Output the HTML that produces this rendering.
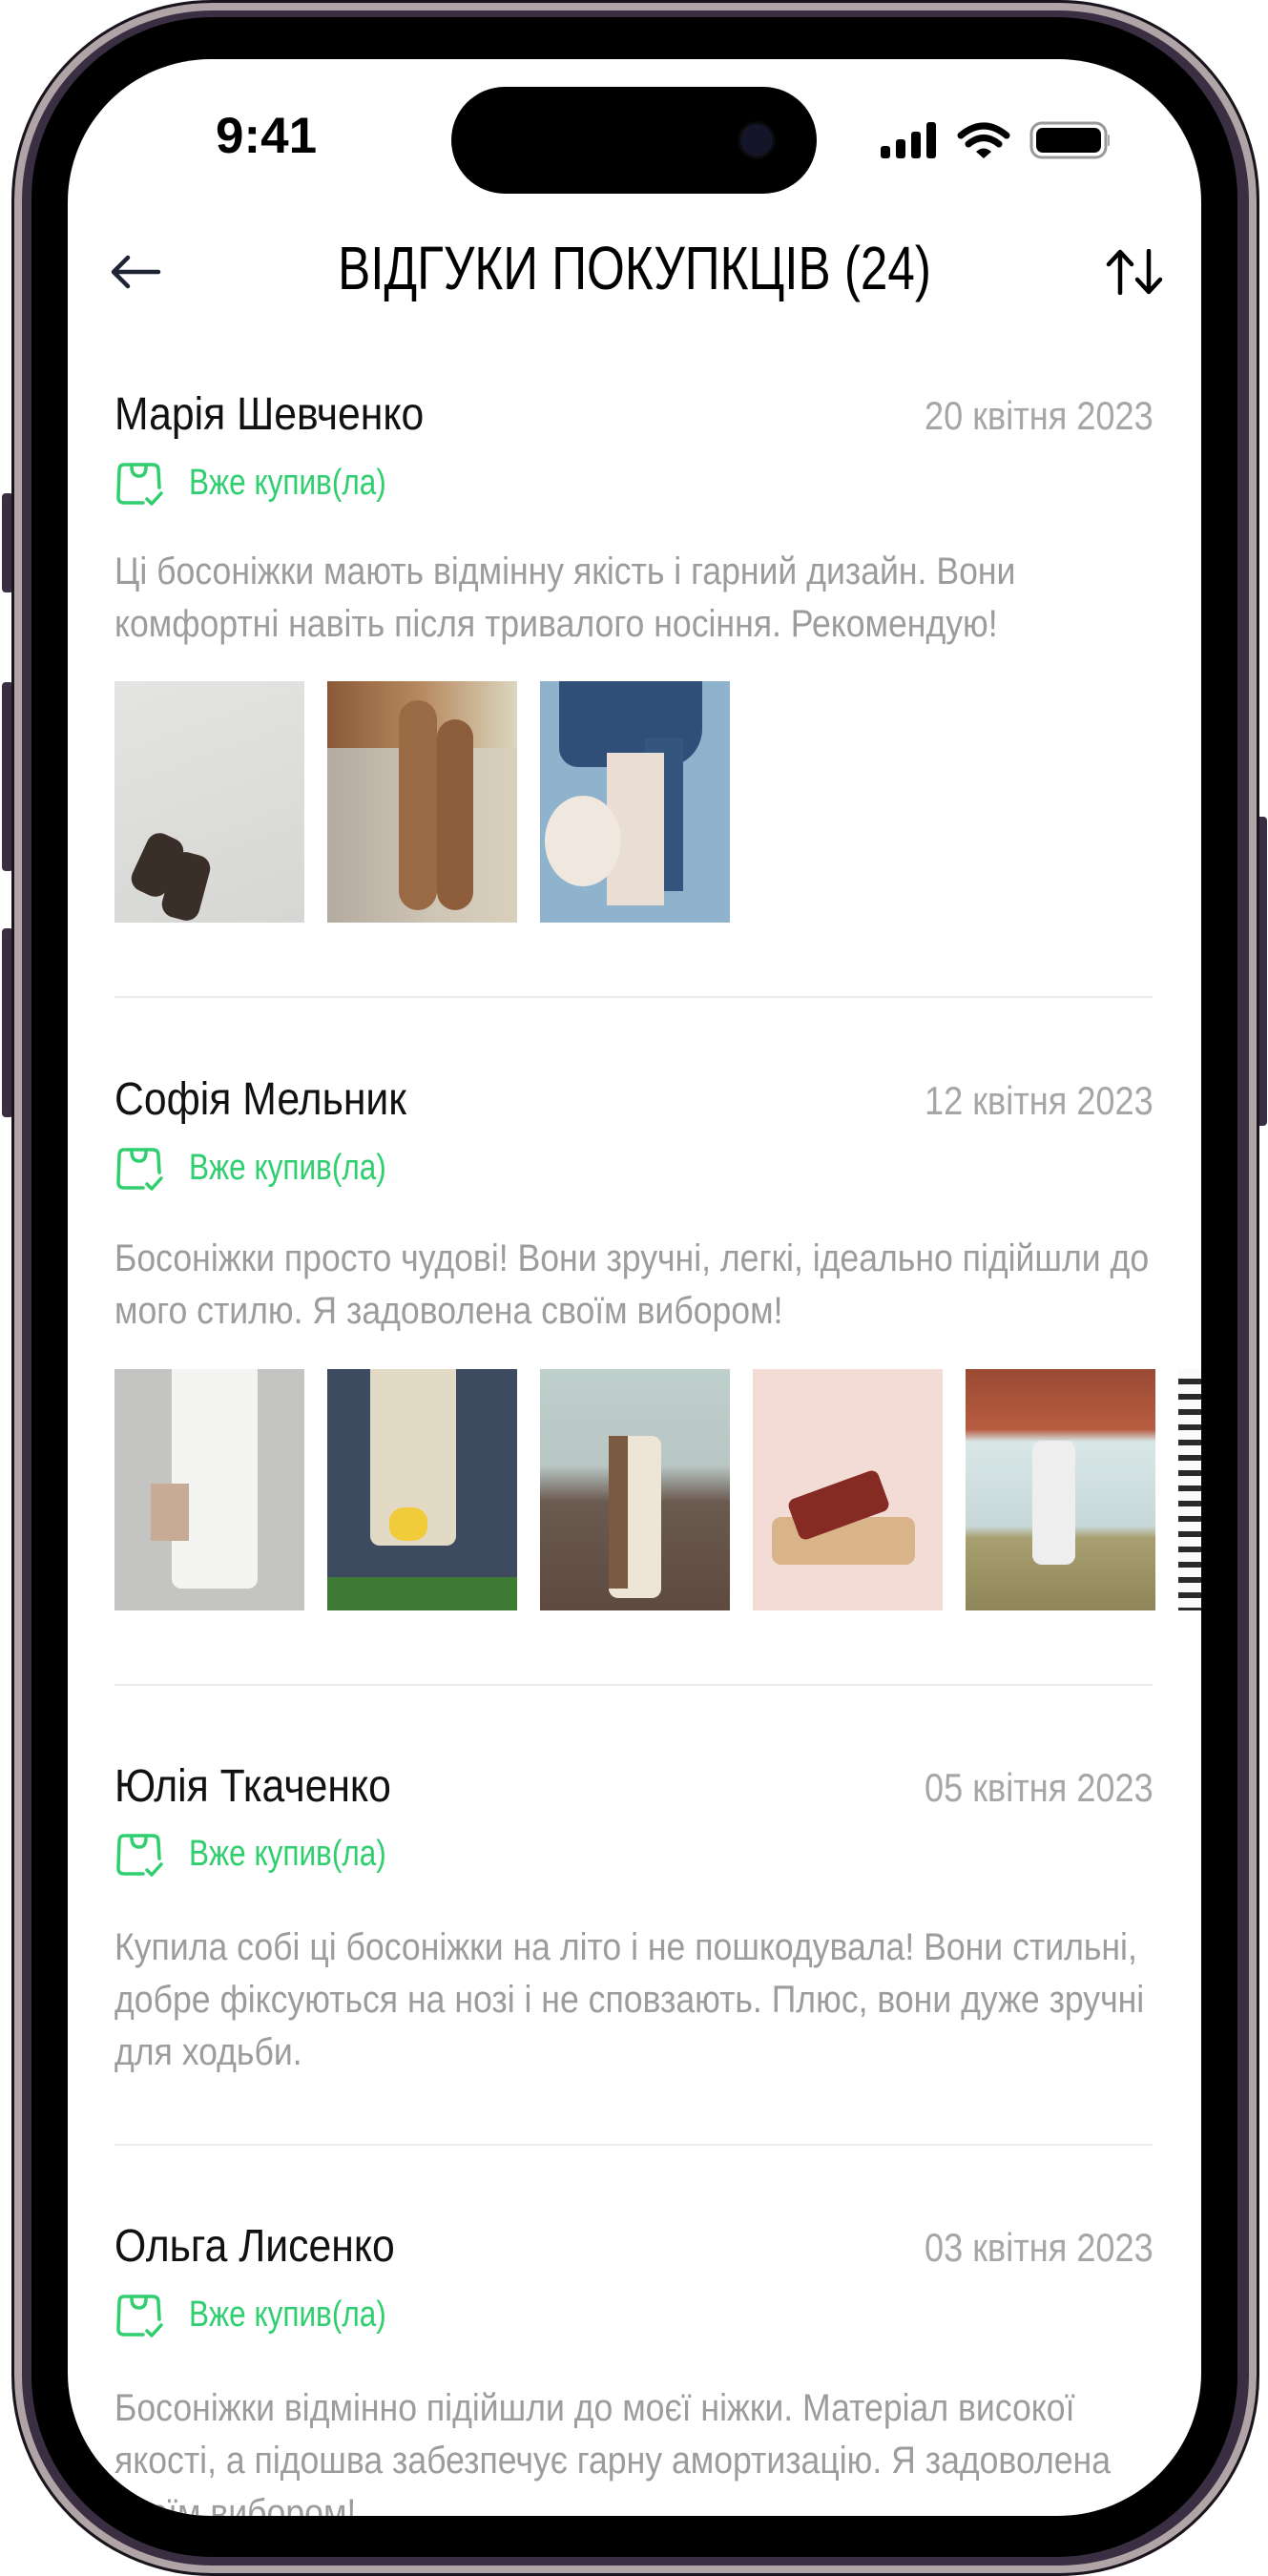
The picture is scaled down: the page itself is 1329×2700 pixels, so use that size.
<!DOCTYPE html>
<html><head><meta charset="utf-8">
<style>
*{margin:0;padding:0;box-sizing:border-box}
html,body{width:1329px;height:2700px;background:#fff;overflow:hidden;position:relative}
body{font-family:"Liberation Sans","Noto Sans CJK SC",sans-serif}
.a{position:absolute}
.frame{left:12px;top:0;width:1308px;height:2700px;border-radius:210px;background:#3a2f42;border:3px solid #1a141e;box-shadow:inset 0 0 0 8px #b0a4a6, inset 0 0 0 11px #3a2f42}
.bezel{left:33px;top:18px;width:1264px;height:2662px;border-radius:190px;background:#000}
.screen{left:71px;top:62px;width:1188px;height:2575px;border-radius:150px;background:#fff;overflow:hidden}
.btn{background:#3a2f42;border-radius:4px}
.t{position:absolute;white-space:nowrap}
.name{font-size:48px;color:#111;transform:scaleX(0.89);transform-origin:0 0}
.date{font-size:42px;color:#a6a6a6;text-align:right;right:50px;transform:scaleX(0.86);transform-origin:100% 0}
.badge{font-size:38px;color:#2fcf6f;transform:scaleX(0.83);transform-origin:0 0}
.txt{font-size:40px;color:#9c9c9c;line-height:55px;transform:scaleX(0.89);transform-origin:0 0}
.ph{position:absolute;width:199px;height:253px;overflow:hidden}
.div{position:absolute;left:49px;width:1088px;height:2px;background:#ececec}
</style></head><body>
<div class="a btn" style="left:2px;top:517px;width:12px;height:104px"></div>
<div class="a btn" style="left:2px;top:715px;width:12px;height:198px"></div>
<div class="a btn" style="left:2px;top:973px;width:12px;height:198px"></div>
<div class="a btn" style="left:1316px;top:856px;width:12px;height:324px"></div>
<div class="a frame"></div>
<div class="a bezel"></div>
<div class="a screen">
  <div class="t" style="left:155px;top:50px;font-weight:bold;font-size:53px;color:#000">9:41</div>
  <div class="a" style="left:402px;top:29px;width:383px;height:112px;border-radius:56px;background:#000"></div>
  <div class="a" style="left:705px;top:68px;width:34px;height:34px;border-radius:50%;background:#15152a;box-shadow:0 0 0 3px #0a0a0a"></div>
  <svg class="a" style="left:852px;top:64px" width="240" height="42" viewBox="0 0 240 42">
    <rect x="0" y="27" width="10" height="13" rx="3" fill="#000"/>
    <rect x="16" y="20" width="10" height="20" rx="3" fill="#000"/>
    <rect x="32" y="12" width="10" height="28" rx="3" fill="#000"/>
    <rect x="48" y="2" width="10" height="38" rx="3" fill="#000"/>
    <path d="M84 16 Q108 -4 132 16" stroke="#000" stroke-width="7" fill="none" stroke-linecap="round"/>
    <path d="M92 25 Q108 12 124 25" stroke="#000" stroke-width="7" fill="none" stroke-linecap="round"/>
    <path d="M100 33 L108 40 L116 33 Q108 26 100 33Z" fill="#000"/>
    <rect x="158" y="3" width="78" height="36" rx="11" fill="none" stroke="#999" stroke-width="3"/>
    <rect x="163" y="8" width="68" height="26" rx="7" fill="#000"/>
    <rect x="238" y="15" width="3" height="12" rx="1.5" fill="#aaa"/>
  </svg>
  <svg class="a" style="left:43px;top:204px" width="56" height="38" viewBox="0 0 56 38">
    <path d="M52 19 H6 M20 4 L5 19 L20 34" stroke="#1e2433" stroke-width="4.5" fill="none" stroke-linecap="round" stroke-linejoin="round"/>
  </svg>
  <div class="t" style="left:0;width:1188px;text-align:center;top:182px;font-size:64px;color:#000;transform:scaleX(0.8);transform-origin:50% 0">ВІДГУКИ ПОКУПКЦІВ (24)</div>
  <svg class="a" style="left:1087px;top:199px" width="62" height="48" viewBox="0 0 62 48">
    <path d="M16 46 V4 M4 16 L16 3 L28 16" stroke="#000" stroke-width="4.5" fill="none" stroke-linecap="round" stroke-linejoin="round"/>
    <path d="M46 2 V44 M34 32 L46 45 L58 32" stroke="#000" stroke-width="4.5" fill="none" stroke-linecap="round" stroke-linejoin="round"/>
  </svg>

  <div class="t name" style="left:49px;top:345px">Марія Шевченко</div>
  <div class="t date" style="top:350px">20 квітня 2023</div>
  <svg class="a" style="left:51px;top:421px" width="54" height="48" viewBox="0 0 54 48"><path d="M10 4 H38 Q44 4 44 10 L45 28 M8 4 Q3 4 3 10 L2 38 Q2 44 8 44 H28 M16 6 Q16 16 24 16 Q31 16 31 6 M32 40 L37 45 L47 34" stroke="#2fcf6f" stroke-width="3.5" fill="none" stroke-linecap="round" stroke-linejoin="round"/></svg>
  <div class="t badge" style="left:127px;top:423px">Вже купив(ла)</div>
  <div class="t txt" style="left:49px;top:510px">Ці босоніжки мають відмінну якість і гарний дизайн. Вони<br>комфортні навіть після тривалого носіння. Рекомендую!</div>
  <div class="ph" style="left:49px;top:652px;background:linear-gradient(160deg,#e4e4e2,#d6d6d4)">
    <div class="a" style="left:25px;top:160px;width:40px;height:65px;border-radius:14px;background:#3a2e28;transform:rotate(25deg)"></div>
    <div class="a" style="left:55px;top:180px;width:40px;height:70px;border-radius:14px;background:#3a2e28;transform:rotate(15deg)"></div>
  </div>
  <div class="ph" style="left:272px;top:652px;background:linear-gradient(90deg,#b3aaa0 0%,#cfc5b6 55%,#d8d0bc 100%)">
    <div class="a" style="left:0;top:0;width:199px;height:70px;background:linear-gradient(90deg,#8a5a38,#b88a60,#dcd6c0)"></div>
    <div class="a" style="left:75px;top:20px;width:40px;height:220px;border-radius:20px;background:#9a6a44"></div>
    <div class="a" style="left:115px;top:40px;width:38px;height:200px;border-radius:20px;background:#8e5e3c"></div>
  </div>
  <div class="ph" style="left:495px;top:652px;background:#8fb2cd">
    <div class="a" style="left:20px;top:0;width:150px;height:90px;background:#2f4f78;border-radius:0 0 40px 20px"></div>
    <div class="a" style="left:110px;top:60px;width:40px;height:160px;background:#34557e"></div>
    <div class="a" style="left:70px;top:75px;width:60px;height:160px;background:#e9ddd4"></div>
    <div class="a" style="left:5px;top:120px;width:80px;height:95px;border-radius:50%;background:#f0e8df"></div>
  </div>
  <div class="div" style="top:982px"></div>

  <div class="t name" style="left:49px;top:1063px">Софія Мельник</div>
  <div class="t date" style="top:1068px">12 квітня 2023</div>
  <svg class="a" style="left:51px;top:1139px" width="54" height="48" viewBox="0 0 54 48"><path d="M10 4 H38 Q44 4 44 10 L45 28 M8 4 Q3 4 3 10 L2 38 Q2 44 8 44 H28 M16 6 Q16 16 24 16 Q31 16 31 6 M32 40 L37 45 L47 34" stroke="#2fcf6f" stroke-width="3.5" fill="none" stroke-linecap="round" stroke-linejoin="round"/></svg>
  <div class="t badge" style="left:127px;top:1141px">Вже купив(ла)</div>
  <div class="t txt" style="left:49px;top:1230px">Босоніжки просто чудові! Вони зручні, легкі, ідеально підійшли до<br>мого стилю. Я задоволена своїм вибором!</div>
  <div class="ph" style="left:49px;top:1373px;background:#c4c4c2">
    <div class="a" style="left:60px;top:0;width:90px;height:230px;background:#f4f4f2;border-radius:0 0 10px 10px"></div>
    <div class="a" style="left:38px;top:120px;width:40px;height:60px;background:#c7ab96"></div>
  </div>
  <div class="ph" style="left:272px;top:1373px;background:#3e4a60">
    <div class="a" style="left:45px;top:0;width:90px;height:185px;background:#e2dac4;border-radius:0 0 10px 10px"></div>
    <div class="a" style="left:65px;top:145px;width:40px;height:35px;background:#f0cc3a;border-radius:40%"></div>
    <div class="a" style="left:0;top:218px;width:199px;height:35px;background:#3d7a34"></div>
  </div>
  <div class="ph" style="left:495px;top:1373px;background:linear-gradient(180deg,#bfcfcc 0%,#b8c6c4 40%,#6a5a50 55%,#5e4a40 100%)">
    <div class="a" style="left:72px;top:70px;width:55px;height:170px;background:#ede5d6;border-radius:10px"></div>
    <div class="a" style="left:72px;top:70px;width:20px;height:160px;background:#7a5a40"></div>
  </div>
  <div class="ph" style="left:718px;top:1373px;background:#f4dcd6">
    <div class="a" style="left:20px;top:155px;width:150px;height:50px;background:#d8b488;border-radius:10px"></div>
    <div class="a" style="left:40px;top:120px;width:100px;height:45px;background:#862a24;border-radius:8px;transform:rotate(-20deg)"></div>
  </div>
  <div class="ph" style="left:941px;top:1373px;background:linear-gradient(180deg,#9a4a34 0%,#b85c40 25%,#d8e6e6 30%,#c8d8d8 65%,#a8a070 70%,#8e8658 100%)">
    <div class="a" style="left:70px;top:75px;width:45px;height:130px;background:#eeeeee;border-radius:10px"></div>
  </div>
  <div class="ph" style="left:1164px;top:1373px;width:30px;background:repeating-linear-gradient(180deg,#fafafa 0 10px,#2a2a2a 10px 16px)"></div>
  <div class="div" style="top:1703px"></div>

  <div class="t name" style="left:49px;top:1783px">Юлія Ткаченко</div>
  <div class="t date" style="top:1788px">05 квітня 2023</div>
  <svg class="a" style="left:51px;top:1858px" width="54" height="48" viewBox="0 0 54 48"><path d="M10 4 H38 Q44 4 44 10 L45 28 M8 4 Q3 4 3 10 L2 38 Q2 44 8 44 H28 M16 6 Q16 16 24 16 Q31 16 31 6 M32 40 L37 45 L47 34" stroke="#2fcf6f" stroke-width="3.5" fill="none" stroke-linecap="round" stroke-linejoin="round"/></svg>
  <div class="t badge" style="left:127px;top:1860px">Вже купив(ла)</div>
  <div class="t txt" style="left:49px;top:1952px">Купила собі ці босоніжки на літо і не пошкодувала! Вони стильні,<br>добре фіксуються на нозі і не сповзають. Плюс, вони дуже зручні<br>для ходьби.</div>
  <div class="div" style="top:2185px"></div>

  <div class="t name" style="left:49px;top:2265px">Ольга Лисенко</div>
  <div class="t date" style="top:2270px">03 квітня 2023</div>
  <svg class="a" style="left:51px;top:2341px" width="54" height="48" viewBox="0 0 54 48"><path d="M10 4 H38 Q44 4 44 10 L45 28 M8 4 Q3 4 3 10 L2 38 Q2 44 8 44 H28 M16 6 Q16 16 24 16 Q31 16 31 6 M32 40 L37 45 L47 34" stroke="#2fcf6f" stroke-width="3.5" fill="none" stroke-linecap="round" stroke-linejoin="round"/></svg>
  <div class="t badge" style="left:127px;top:2343px">Вже купив(ла)</div>
  <div class="t txt" style="left:49px;top:2435px">Босоніжки відмінно підійшли до моєї ніжки. Матеріал високої<br>якості, а підошва забезпечує гарну амортизацію. Я задоволена<br>своїм вибором!</div>
</div>
</body></html>
